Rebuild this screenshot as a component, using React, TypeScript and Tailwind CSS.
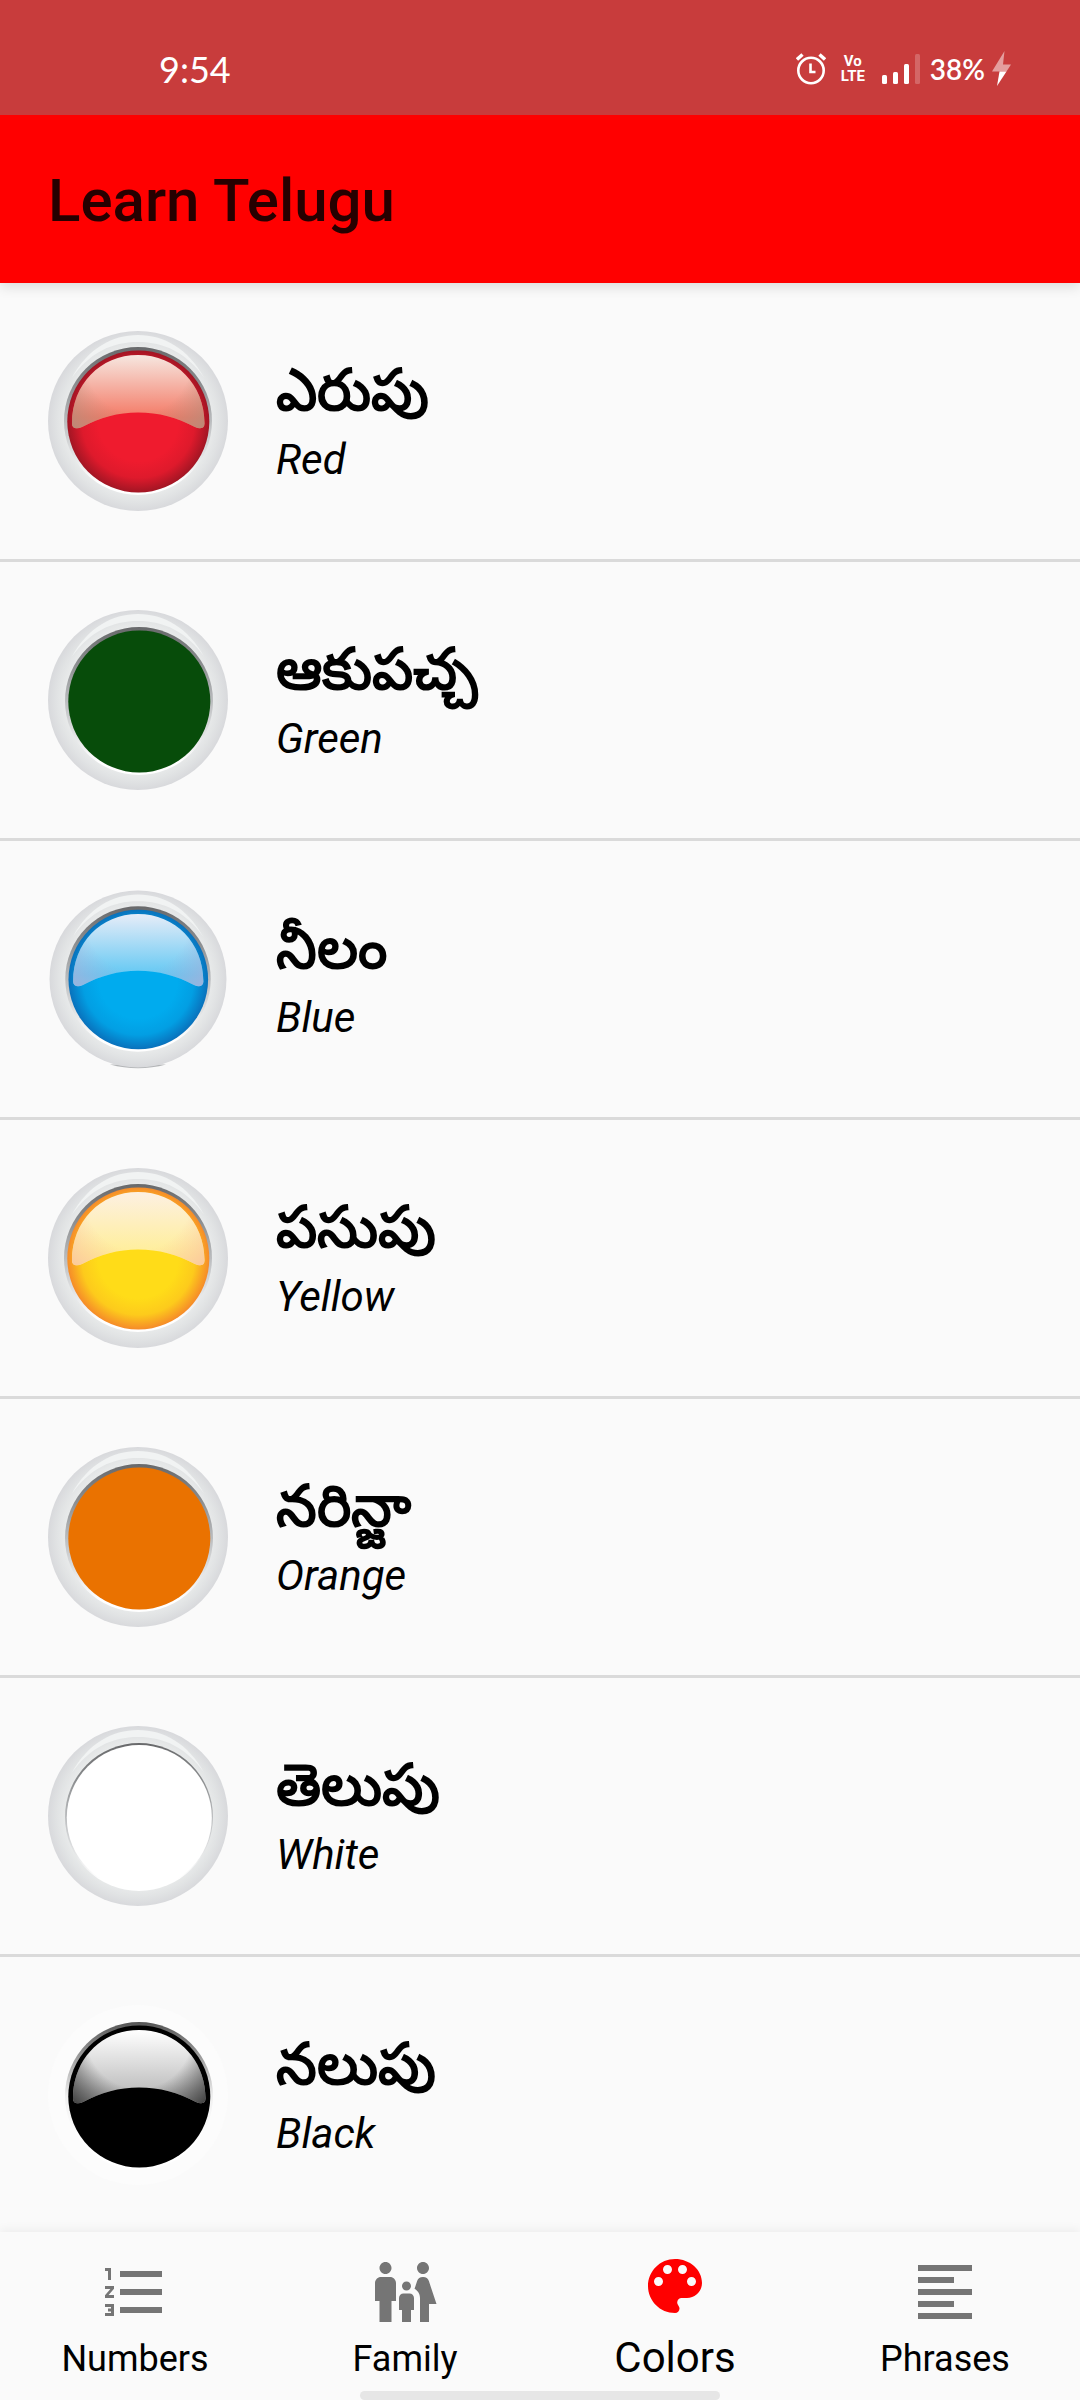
import React from "react";
import { MdFormatListNumbered, MdFamilyRestroom, MdFormatAlignLeft } from "react-icons/md";

type Ball = {
  center: string;
  edge: string;
  glossTop?: string;
  glossBottom?: string;
  glossSide?: string;
  ring?: boolean;
  scale?: number;
  shift?: number;
  sliver?: boolean;
  thinShade?: boolean;
};

type Word = { id: string; telugu: string; english: string; ball: Ball };

const words: Word[] = [
  { id: "red", telugu: "ఎరుపు", english: "Red", ball: { center: "#ef1b2e", edge: "#9c1523", glossTop: "#f6e7e0", glossBottom: "#f47a66", glossSide: "#b98a78" } },
  { id: "green", telugu: "ఆకుపచ్చ", english: "Green", ball: { center: "#074c0a", edge: "#074c0a", shift: 1 } },
  { id: "blue", telugu: "నీలం", english: "Blue", ball: { center: "#00abee", edge: "#0a6db8", glossTop: "#e6ecf8", glossBottom: "#62c8f3", glossSide: "#9db2dc", scale: 0.983, sliver: true } },
  { id: "yellow", telugu: "పసుపు", english: "Yellow", ball: { center: "#ffdc18", edge: "#f5852a", glossTop: "#fdf0e2", glossBottom: "#ffee98", glossSide: "#fbc79c" } },
  { id: "orange", telugu: "నరిన్జా", english: "Orange", ball: { center: "#ea7200", edge: "#ea7200", shift: 1 } },
  { id: "white", telugu: "తెలుపు", english: "White", ball: { center: "#ffffff", edge: "#ffffff", thinShade: true, shift: 1 } },
  { id: "black", telugu: "నలుపు", english: "Black", ball: { center: "#000000", edge: "#000000", glossTop: "#ffffff", glossBottom: "#bdbdbd", glossSide: "#3c3c3c", ring: false, shift: 1 } },
];

function ColorBall({ id, ball }: { id: string; ball: Ball }) {
  const ring = ball.ring !== false;
  const s = ball.scale ?? 1;
  const d = ball.shift ?? 0;
  return (
    <svg className="size-[180px] shrink-0" viewBox="0 0 180 180" aria-hidden="true">
      <defs>
        <radialGradient id={`${id}-ring`} cx="0.5" cy="0.5" r="0.5">
          <stop offset="0.8" stopColor="#e9ebeb" />
          <stop offset="0.9" stopColor="#e1e3e4" />
          <stop offset="1" stopColor="#d8d9dc" />
        </radialGradient>
        <linearGradient id={`${id}-shade`} x1="0" y1="0" x2="0" y2="1">
          <stop offset="0" stopColor={ring ? "#68696b" : "#555555"} />
          <stop offset="0.25" stopColor={ring ? "#8b8d8f" : "#a0a0a0"} />
          <stop offset="0.5" stopColor={ring ? "#babcbe" : "#f0f0f0"} />
          <stop offset="0.75" stopColor={ring ? "#e6e7e8" : "#fdfdfd"} />
          <stop offset="0.92" stopColor="#ffffff" />
        </linearGradient>
        <radialGradient id={`${id}-body`} cx="0.5" cy="0.5" r="0.51">
          <stop offset="0.55" stopColor={ball.center} />
          <stop offset="0.78" stopColor={ball.center} stopOpacity="0.8" />
          <stop offset="1" stopColor={ball.center} stopOpacity="0" />
        </radialGradient>
        <linearGradient id={`${id}-gloss`} x1="0" y1="0" x2="0" y2="1">
          <stop offset="0" stopColor={ball.glossTop} />
          <stop offset="0.85" stopColor={ball.glossBottom} />
        </linearGradient>
        <radialGradient id={`${id}-side`} gradientUnits="userSpaceOnUse" cx="90" cy="30" r="96">
          <stop offset="0.55" stopColor={ball.glossSide} stopOpacity="0" />
          <stop offset="1" stopColor={ball.glossSide} stopOpacity="1" />
        </radialGradient>
      </defs>
      {ball.sliver && <path d="M62 175.500 Q90 183 118 175.500Z" fill="#b3b5b7" />}
      <g transform={`translate(${90 - 90 * s} ${90 - 90.500 * s}) scale(${s})`}>
        <circle cx="90" cy="90.500" r="90" fill={ring ? `url(#${id}-ring)` : "#fcfcfc"} />
        {ring && (
          <path d="M24 47 C40 18 64 4.500 90 4.500 C116 4.500 140 18 156 47 C138 22 116 11.500 90 11.500 C64 11.500 42 22 24 47 Z" fill="#f1f3f3" />
        )}
        <g transform={`translate(${d} ${d})`}>
          <circle cx="90" cy="90.500" r="74" fill={`url(#${id}-shade)`} />
          <circle cx="90.300" cy="91" r={ball.thinShade ? 72.500 : 71} fill={ball.edge} />
          <circle cx="90.300" cy="91" r={ball.thinShade ? 72.500 : 71} fill={`url(#${id}-body)`} />
          {ball.glossTop &&
            [`url(#${id}-gloss)`, `url(#${id}-side)`].map((fill) => (
              <path
                key={fill}
                d="M24 93 C24 54 52 24.500 90 24.500 C128 24.500 156.500 54 156.500 93 C156.500 98 152 99 147 96.500 C129 87 111 82 90 82 C70 82 52 87 34 96.500 C29 99 24 98 24 93 Z"
                fill={fill}
              />
            ))}
        </g>
      </g>
    </svg>
  );
}

function PaletteIcon({ className }: { className?: string }) {
  return (
    <svg className={className} viewBox="0 0 24 24" fill="currentColor" aria-hidden="true">
      <path d="M12 3c-4.970 0-9 4.030-9 9s4.030 9 9 9c.83 0 1.500-.67 1.500-1.500 0-.39-.15-.74-.39-1.010-.23-.26-.38-.61-.38-.99 0-.83.67-1.500 1.500-1.500H16c2.760 0 5-2.240 5-5 0-4.420-4.030-8-9-8zm-5.500 9c-.83 0-1.500-.67-1.500-1.500S5.670 9 6.500 9 8 9.670 8 10.500 7.330 12 6.500 12zm3-4C8.670 8 8 7.330 8 6.500S8.670 5 9.500 5s1.500.67 1.500 1.500S10.330 8 9.500 8zm5 0c-.83 0-1.500-.67-1.500-1.500S13.670 5 14.500 5s1.500.67 1.500 1.500S15.330 8 14.500 8zm3 4c-.83 0-1.500-.67-1.500-1.500S16.670 9 17.500 9s1.500.67 1.500 1.500-.67 1.500-1.500 1.500z" />
    </svg>
  );
}

function StatusBar() {
  return (
    <div className="flex h-[115px] items-center justify-between bg-[#c83c3c] pt-[22px] pr-[69px] pl-[159px] font-['Lato',sans-serif] text-white">
      <span className="text-[36px] leading-[40px]">9:54</span>
      <div className="flex items-center">
        <svg className="h-8 w-[30px]" viewBox="0 0 30 32" fill="none" stroke="#fff" aria-label="Alarm set">
          <circle cx="15" cy="17.500" r="12.700" strokeWidth="2.600" />
          <path d="M14.500 10.500v8.500h5" strokeWidth="2.600" />
          <path d="M1 6.500L6.500 1.500M29 6.500L23.500 1.500" strokeWidth="3.400" />
        </svg>
        <div className="ml-4 flex w-[22px] flex-col items-center font-['Roboto',sans-serif] text-[15px] leading-[15px] font-bold">
          <span>Vo</span>
          <span>LTE</span>
        </div>
        <svg className="ml-[18px] h-[30px] w-[38px]" viewBox="0 0 38 30" fill="#fff" aria-label="Signal strength">
          <rect x="0" y="21" width="5" height="9" rx="1.500" />
          <rect x="11" y="18" width="5" height="12" rx="1.500" />
          <rect x="22" y="10" width="5" height="20" rx="1.500" />
          <rect x="33" y="0" width="5" height="30" rx="1.500" opacity="0.22" />
        </svg>
        <span className="ml-[10px] text-[28px] leading-[32px] font-semibold">38%</span>
        <svg className="ml-[7px] h-[35px] w-[19px]" viewBox="0 0 19 35" fill="#fff" aria-label="Charging">
          <path d="M12.500 0L0 20.500H14.500L19 13.500H11Z" opacity="0.5" />
          <path d="M7.500 20.500H14.500L5 35Z" />
        </svg>
      </div>
    </div>
  );
}

const tabs = [
  { label: "Numbers", Icon: MdFormatListNumbered, active: false },
  { label: "Family", Icon: MdFamilyRestroom, active: false },
  { label: "Colors", Icon: PaletteIcon, active: true },
  { label: "Phrases", Icon: MdFormatAlignLeft, active: false },
];

export default function App() {
  return (
    <div className="flex h-screen flex-col bg-[#fafafa] font-['Roboto',sans-serif] text-black">
      <header className="relative z-10 shadow-[0_4px_12px_rgba(0,0,0,0.12)]">
        <StatusBar />
        <div className="flex h-[168px] items-center bg-[#ff0000] px-12 pt-1">
          <h1 className="text-[60px] leading-[72px] font-medium text-[#260000]">Learn Telugu</h1>
        </div>
      </header>

      <main className="min-h-0 flex-1 overflow-hidden">
        <ul className="divide-y-[3px] divide-[#dadada]">
          {words.map((w) => (
            <li key={w.id}>
              <button type="button" className="flex w-full items-center gap-12 p-12 text-left">
                <ColorBall id={w.id} ball={w.ball} />
                <span className="flex flex-col">
                  <span lang="te" className="h-[78px] text-[58px] leading-[66px] font-bold whitespace-nowrap">
                    {w.telugu}
                  </span>
                  <span className="text-[42px] leading-[50px] italic">{w.english}</span>
                </span>
              </button>
            </li>
          ))}
        </ul>
      </main>

      <nav className="relative grid h-[168px] shrink-0 grid-cols-4 bg-[#fafafa] shadow-[0_-2px_10px_rgba(0,0,0,0.06)]">
        {tabs.map(({ label, Icon, active }) => (
          <a
            key={label}
            href={`#${label.toLowerCase()}`}
            aria-current={active ? "page" : undefined}
            className={`flex flex-col items-center justify-between pb-[18px] ${active ? "pt-[18px]" : "pt-6"}`}
          >
            <Icon className={`size-[72px] shrink-0 ${active ? "text-[#ff0000]" : "text-[#757575]"}`} />
            <span className={active ? "text-[42px] leading-[48px]" : "text-[36px] leading-[46px]"}>{label}</span>
          </a>
        ))}
        <div className="absolute inset-x-1/3 bottom-0 h-[9px] rounded-full bg-[#e6e6e6]" />
      </nav>
    </div>
  );
}
